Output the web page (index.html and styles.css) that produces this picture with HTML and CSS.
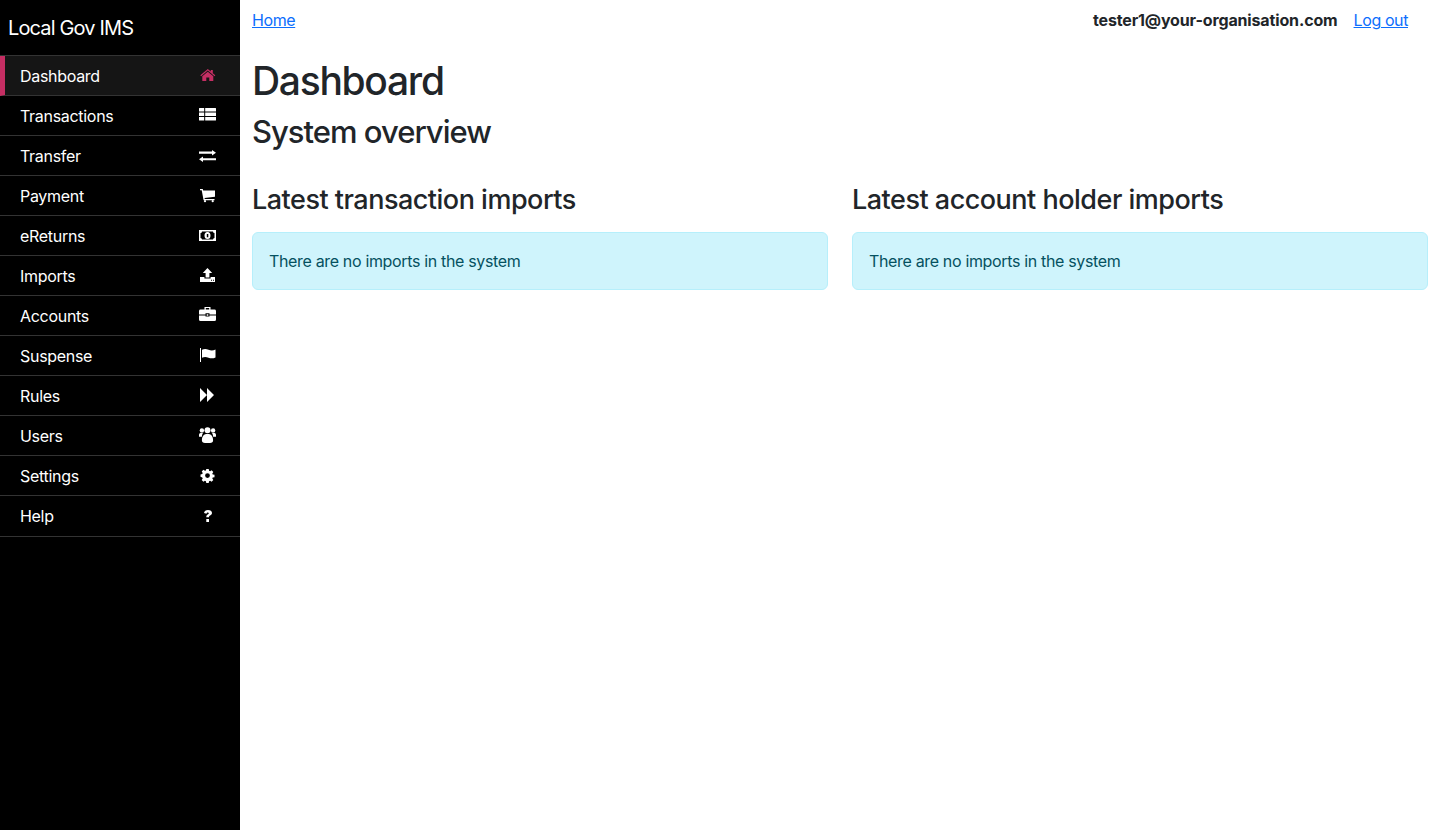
FILE: index.html
```html
<!DOCTYPE html>
<html lang="en">
<head>
<meta charset="utf-8">
<title>Dashboard</title>
<link rel="stylesheet" href="styles.css">
</head>
<body>
<div class="layout">
  <aside class="sidebar">
    <div class="brand">Local Gov IMS</div>
    <nav class="nav">
      <a class="nav-item active" href="#"><span>Dashboard</span>
        <svg class="ico" viewBox="0 0 18 18"><path d="M8.800 3 L11.800 5.500 V4 H13.800 V7.200 L16.300 9.300 L15.500 10.200 L8.800 4.600 L2.100 10.200 L1.300 9.300 Z M3.300 10.300 L8.800 5.800 L14.300 10.300 V15 H10.300 V11.500 H7.300 V15 H3.300 Z"/></svg></a>
      <a class="nav-item" href="#"><span>Transactions</span>
        <svg class="ico" viewBox="0 0 18 18"><path d="M.5 2h4.700v3.500H0V2.500Q0 2 .5 2zM6.200 2h10.300q.5 0 .5.500v3H6.200zM0 6.500h5.200V10H0zM6.200 6.500H17V10H6.200zM0 11h5.200v3.500H.5q-.5 0-.5-.5zM6.200 11H17v3q0 .5-.5.500H6.200z"/></svg></a>
      <a class="nav-item" href="#"><span>Transfer</span>
        <svg class="ico" viewBox="0 0 18 18"><path d="M0 5.500h13V4l4 2.700-4 2.700V7.700H0zM17 12.300H4v-1.800L0 13.300 4 16v-1.800h13z"/></svg></a>
      <a class="nav-item" href="#"><span>Payment</span>
        <svg class="ico" viewBox="0 0 18 18"><path d="M1 3h2.700l.5 1.600H16v6.200L5.500 12l.3 1.100h9.700v1.200H4.600L2.700 4.200H1z"/><circle cx="6" cy="15.200" r="1.100"/><circle cx="13.700" cy="15.200" r="1.100"/></svg></a>
      <a class="nav-item" href="#"><span>eReturns</span>
        <svg class="ico" viewBox="0 0 18 18"><path fill-rule="evenodd" d="M0 4h17v11H0zM3 5.500Q3 7 1.500 7V12Q3 12 3 13.500H14Q14 12 15.500 12V7Q14 7 14 5.500zM8.500 6a3 3.500 0 1 0 0 7 3 3.500 0 0 0 0-7zM7.800 8H9.300V11.300H7.800z"/></svg></a>
      <a class="nav-item" href="#"><span>Imports</span>
        <svg class="ico" viewBox="0 0 18 18"><path fill-rule="evenodd" d="M8.500 2l4.700 5h-2.800v4.600H6.600V7H3.800zM1 11h4.400v1.500h6.200V11H16v5H1zM12 13.700h1v1h-1zM14 13.700h1v1h-1z"/></svg></a>
      <a class="nav-item" href="#"><span>Accounts</span>
        <svg class="ico" viewBox="0 0 18 18"><path fill-rule="evenodd" d="M5.500 1h6v2.600h4A1.500 1.500 0 0 1 17 5v3.400h-6.500V7.300h-4v1.100H0V5a1.500 1.500 0 0 1 1.500-1.400h4zM6.800 2.100v1.500h3.400V2.100zM0 9.400h6.500v1.200h4V9.400H17V13.500A1.500 1.500 0 0 1 15.500 15h-14A1.500 1.500 0 0 1 0 13.500zM7.700 8.300h1.600v1.400H7.700z"/></svg></a>
      <a class="nav-item" href="#"><span>Suspense</span>
        <svg class="ico" viewBox="0 0 18 18"><path d="M1 2h1v14H1zM3 3.800C5.500 2.600 7.500 3 9.500 3.800s4.500 1 7-.2V11.500c-2.500 1.200-5 1-7 .2s-4-1.200-6.500 0z"/></svg></a>
      <a class="nav-item" href="#"><span>Rules</span>
        <svg class="ico" viewBox="0 0 18 18"><path d="M1 2 8 9 1 16zM8 2 15 9 8 16z"/></svg></a>
      <a class="nav-item" href="#"><span>Users</span>
        <svg class="ico" viewBox="0 0 18 18"><circle cx="2.900" cy="4.400" r="2.200"/><circle cx="14.100" cy="4.400" r="2.200"/><circle cx="8.500" cy="4.200" r="3"/><path d="M0 10.800V9c0-1.500 1-2.200 3-2.200.4 0 .8.100 1 .2-.6.900-1 1.900-1.100 3.800zM17 10.800V9c0-1.500-1-2.200-3-2.200-.4 0-.8.100-1 .2.600.9 1 1.900 1.100 3.800zM2.900 14.500C2.900 9.800 5 8 8.500 8s5.600 1.800 5.600 6.500C14.100 16 13 17 11 17H6c-2 0-3.100-1-3.100-2.500z"/></svg></a>
      <a class="nav-item" href="#"><span>Settings</span>
        <svg class="ico" viewBox="0 0 18 18"><path fill-rule="evenodd" d="M7.300 3h2.400l.4 1.800 1 .4 1.500-1 1.700 1.700-1 1.500.4 1 1.800.4v2.400l-1.800.4-.4 1 1 1.500-1.700 1.700-1.500-1-1 .4-.4 1.800H7.300l-.4-1.800-1-.4-1.500 1-1.700-1.700 1-1.500-.4-1L1.500 10.800V8.400l1.800-.4.4-1-1-1.500 1.700-1.700 1.500 1 1-.4zM8.500 7.200a2.400 2.400 0 1 0 0 4.800 2.400 2.400 0 0 0 0-4.800z"/></svg></a>
      <a class="nav-item" href="#"><span>Help</span>
        <svg class="ico" viewBox="0 0 18 18"><path d="M5 7C5.300 5 6.800 4 9 4c2.300 0 4 1.200 4 3 0 1.300-.8 2-1.900 2.600-.8.400-1.100.8-1.100 1.700H7.300c0-1.500.4-2.200 1.400-2.800.7-.4 1.100-.7 1.100-1.300 0-.5-.4-.8-1-.8-.7 0-1.100.4-1.300 1.300zM7.300 13H10v3H7.300z"/></svg></a>
    </nav>
  </aside>
  <main class="main">
    <div class="topbar">
      <a class="link" href="#">Home</a>
      <div class="user">
        <strong>tester1@your-organisation.com</strong>
        <a class="link" href="#">Log out</a>
      </div>
    </div>
    <h1>Dashboard</h1>
    <h2>System overview</h2>
    <div class="columns">
      <section>
        <h3>Latest transaction imports</h3>
        <div class="alert">There are no imports in the system</div>
      </section>
      <section>
        <h3>Latest account holder imports</h3>
        <div class="alert">There are no imports in the system</div>
      </section>
    </div>
  </main>
</div>
</body>
</html>
```

FILE: styles.css
```css
* { box-sizing: border-box; }
html, body { margin: 0; height: 100%; }
body {
  font-family: Inter, "Liberation Sans", sans-serif;
  font-size: 16px;
  line-height: 1.5;
  letter-spacing: -0.3px;
  color: #212529;
  background: #fff;
}
.layout { display: flex; min-height: 830px; }
.sidebar { width: 240px; flex: none; background: #000; color: #fff; }
.brand { height: 55px; padding: 14px 8px 0; font-size: 20px; line-height: 28px; letter-spacing: -0.85px; }
.nav { border-top: 1px solid #333; }
.nav-item {
  display: flex;
  align-items: center;
  justify-content: space-between;
  height: 40px;
  padding: 1px 23px 0 20px;
  border-bottom: 1px solid #333;
  color: #fff;
  text-decoration: none;
}
.nav-item:last-child { height: 41px; padding-bottom: 1px; }
.nav-item.active {
  background: #151515;
  padding-left: 15px;
  border-left: 5px solid #c52e63;
}
.ico { width: 18px; height: 18px; fill: #fff; margin-bottom: 2px; }
.active .ico { fill: #c52e63; }
.main { flex: 1; min-width: 0; padding: 8px 12px 0; }
.topbar { display: flex; justify-content: space-between; padding-right: 20px; height: 24px; }
.user { display: flex; gap: 16px; }
.link { color: #0d6efd; text-decoration: underline; letter-spacing: -0.4px; }
strong { font-weight: 700; letter-spacing: -0.14px; }
h1, h2, h3 { margin: 0; font-weight: 500; line-height: 1.2; }
h1 { font-size: 39px; line-height: 48px; letter-spacing: -1.3px; margin-top: 25px; margin-bottom: 8px; }
h2 { font-size: 31px; line-height: 38px; letter-spacing: -1px; margin-bottom: 32px; }
h3 { font-size: 27px; line-height: 34px; letter-spacing: -0.5px; margin-bottom: 15px; }
.columns { display: grid; grid-template-columns: 1fr 1fr; gap: 24px; }
.alert {
  padding: 16px;
  background: #cff4fc;
  border: 1px solid #b6effb;
  border-radius: 6px;
  color: #055160;
  letter-spacing: -0.34px;
}
```
